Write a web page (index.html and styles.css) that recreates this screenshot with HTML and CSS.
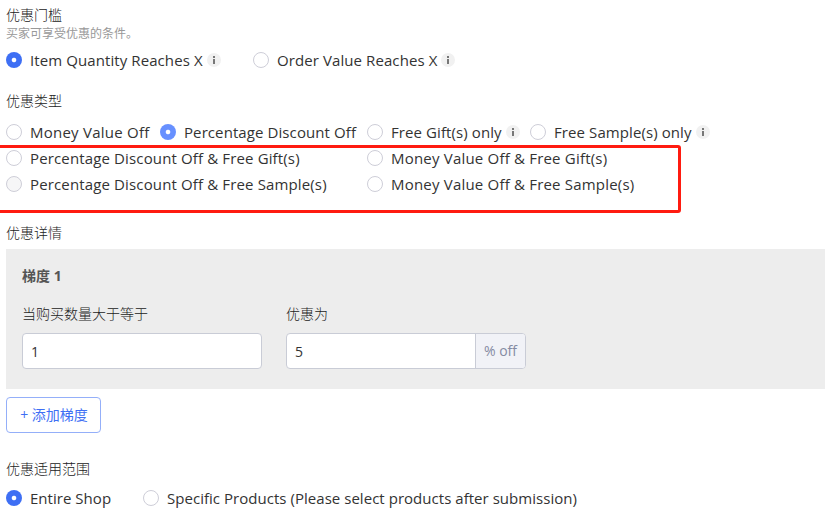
FILE: index.html
```html
<!DOCTYPE html>
<html lang="zh-CN">
<head>
<meta charset="utf-8">
<title>优惠设置</title>
<link rel="stylesheet" href="styles.css">
</head>
<body>
<main class="form">
  <section class="field">
    <h2 class="label">优惠门槛</h2>
    <p class="hint">买家可享受优惠的条件。</p>
    <div class="options threshold">
      <div class="option"><span class="radio checked"></span><span class="text">Item Quantity Reaches X</span><svg class="info" viewBox="0 0 14 14"><circle cx="7" cy="7" r="7"/><path d="M6 3h2v2H6zM6 6h2v5H6z"/></svg></div>
      <div class="option"><span class="radio"></span><span class="text">Order Value Reaches X</span><svg class="info" viewBox="0 0 14 14"><circle cx="7" cy="7" r="7"/><path d="M6 3h2v2H6zM6 6h2v5H6z"/></svg></div>
    </div>
  </section>

  <section class="field types">
    <h2 class="label">优惠类型</h2>
    <div class="options kinds">
      <div class="option"><span class="radio"></span><span class="text">Money Value Off</span></div>
      <div class="option"><span class="radio checked hover"></span><span class="text">Percentage Discount Off</span></div>
      <div class="option"><span class="radio"></span><span class="text">Free Gift(s) only</span><svg class="info" viewBox="0 0 14 14"><circle cx="7" cy="7" r="7"/><path d="M6 3h2v2H6zM6 6h2v5H6z"/></svg></div>
      <div class="option"><span class="radio"></span><span class="text">Free Sample(s) only</span><svg class="info" viewBox="0 0 14 14"><circle cx="7" cy="7" r="7"/><path d="M6 3h2v2H6zM6 6h2v5H6z"/></svg></div>
      <div class="option wide"><span class="radio"></span><span class="text">Percentage Discount Off &amp; Free Gift(s)</span></div>
      <div class="option wide"><span class="radio"></span><span class="text">Money Value Off &amp; Free Gift(s)</span></div>
      <div class="option wide"><span class="radio disabled"></span><span class="text">Percentage Discount Off &amp; Free Sample(s)</span></div>
      <div class="option wide"><span class="radio"></span><span class="text">Money Value Off &amp; Free Sample(s)</span></div>
    </div>
    <div class="highlight"></div>
  </section>

  <section class="field">
    <h2 class="label">优惠详情</h2>
    <div class="tier">
      <h3 class="tier-title">梯度 1</h3>
      <div class="inputs">
        <div class="cell"><span class="label">当购买数量大于等于</span><div class="input"><span class="value">1</span></div></div>
        <div class="cell"><span class="label">优惠为</span><div class="input"><span class="value">5</span><span class="suffix">% off</span></div></div>
      </div>
    </div>
    <button class="add" type="button">+ 添加梯度</button>
  </section>

  <section class="field">
    <h2 class="label">优惠适用范围</h2>
    <div class="options scope">
      <div class="option"><span class="radio checked"></span><span class="text">Entire Shop</span></div>
      <div class="option"><span class="radio"></span><span class="text">Specific Products (Please select products after submission)</span></div>
    </div>
  </section>
</main>
</body>
</html>
```
FILE: styles.css
```css
* { box-sizing: border-box; }
body {
  margin: 0;
  background: #fff;
  color: #333;
  font-family: "Open Sans", "Noto Sans CJK SC", sans-serif;
  font-size: 15px;
}
h2, h3, p { margin: 0; }
.form {
  display: flex;
  flex-direction: column;
  height: 520px;
  padding: 5px 3px 0 6px;
  overflow: hidden;
}
.label {
  display: block;
  height: 20px;
  font-size: 14px;
  font-weight: 300;
  line-height: 20px;
  color: #222;
}
.hint {
  height: 18px;
  font-size: 12px;
  line-height: 18px;
  color: #999;
}
.options { display: grid; }
.option {
  display: flex;
  align-items: center;
  height: 26px;
  white-space: nowrap;
}
.text { margin-left: 8px; line-height: 26px; letter-spacing: 0.09px; }
.threshold { grid-template-columns: 247px auto; margin-top: 4px; }
.kinds { grid-template-columns: 154px 207px 163px 1fr; margin-top: 8px; }
.wide { grid-column: span 2; }
.wide .text { letter-spacing: 0.14px; }
.wide:nth-child(even) .text { letter-spacing: 0.2px; }
.kinds .option:first-child .text { letter-spacing: 0.24px; }
.scope { grid-template-columns: 137px auto; margin-top: 6px; }
.scope .text { letter-spacing: 0.035px; }
.radio {
  flex: none;
  width: 16px;
  height: 16px;
  border: 1px solid #ceced8;
  border-radius: 50%;
  background: #fff;
}
.radio.checked { border: 0; background: radial-gradient(circle, #fff 1.9px, #3e6ff4 2.7px); }
.radio.checked.hover { background: radial-gradient(circle, #fff 1.9px, #6790ff 2.7px); }
.radio.disabled { background: #f6f6f7; }
.info { width: 14px; height: 14px; margin-left: 4px; }
.info circle { fill: #f1f1f1; }
.info path { fill: #777; }
.types { position: relative; margin-top: 18px; }
.types + .field { margin-top: 26px; }
.highlight {
  position: absolute;
  top: 54px;
  left: -9px;
  width: 684px;
  height: 68px;
  border: 3px solid #ff1b10;
  border-radius: 3px;
}
.tier {
  height: 140px;
  margin-top: 6px;
  padding: 16px;
  background: #ededed;
}
.tier-title { height: 22px; font-size: 14px; line-height: 22px; font-weight: 700; color: #555; }
.inputs { display: flex; gap: 24px; margin-top: 17px; }
.cell { width: 240px; }
.input {
  display: flex;
  height: 36px;
  margin-top: 9px;
  border: 1px solid #c9ccd6;
  border-radius: 4px;
  background: #fff;
  overflow: hidden;
  font-size: 14px;
  line-height: 36px;
}
.value { flex: 1; padding-left: 8px; }
.suffix {
  width: 50px;
  border-left: 1px solid #c9ccd6;
  background: #f1f2f7;
  color: #858ba3;
  line-height: 34px;
  text-align: center;
}
.add {
  display: block;
  width: 95px;
  height: 36px;
  margin: 8px 0 26px;
  padding: 0 0 2px 1px;
  border: 1px solid #94aff9;
  border-radius: 4px;
  background: #fff;
  color: #3e6ff4;
  font: inherit;
  font-size: 14px;
}
```
